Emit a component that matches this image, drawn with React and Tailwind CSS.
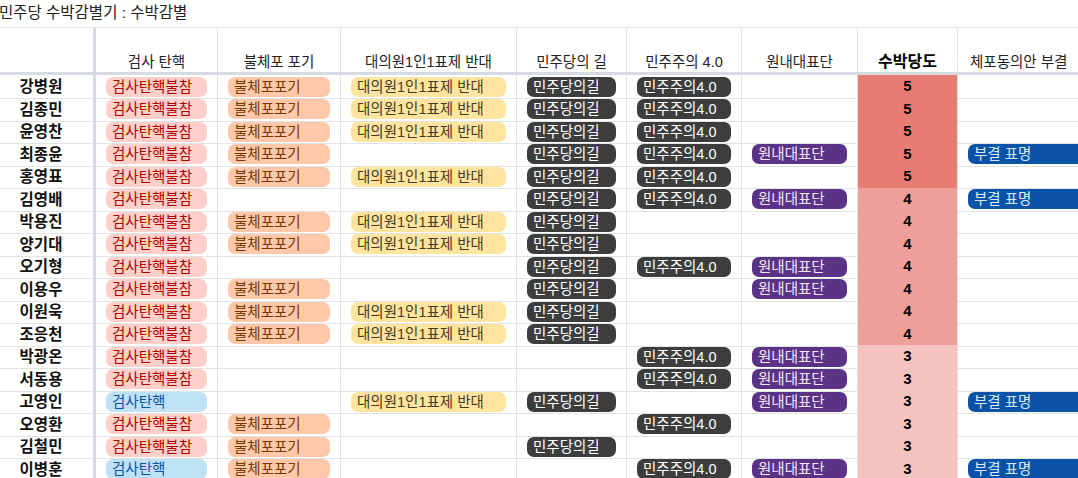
const CHIP = {
  검사탄핵불참: 'bg-[#ffcfc9] text-[#b10202]',
  검사탄핵: 'bg-[#bfe1f6] text-[#0a53a8]',
  불체포포기: 'bg-[#ffc8aa] text-[#753800]',
  '대의원1인1표제 반대': 'bg-[#ffe5a0] text-[#473821]',
  민주당의길: 'bg-[#3d3d3d] text-white',
  '민주주의4.0': 'bg-[#3d3d3d] text-white',
  원내대표단: 'bg-[#5a3286] text-[#f3e6fa]',
  '부결 표명': 'bg-[#0a53a8] text-[#d6ecfa]',
}

const scoreBg = {
  5: 'bg-[#e67c73]',
  4: 'bg-[#ee9f99]',
  3: 'bg-[#f4c3c0]',
}

const A = '검사탄핵불참'
const B = '검사탄핵'
const P = '불체포포기'
const D = '대의원1인1표제 반대'
const G = '민주당의길'
const M = '민주주의4.0'
const W = '원내대표단'
const V = '부결 표명'

const rows = [
  ['강병원', A, P, D, G, M, '', 5, ''],
  ['김종민', A, P, D, G, M, '', 5, ''],
  ['윤영찬', A, P, D, G, M, '', 5, ''],
  ['최종윤', A, P, '', G, M, W, 5, V],
  ['홍영표', A, P, D, G, M, '', 5, ''],
  ['김영배', A, '', '', G, M, W, 4, V],
  ['박용진', A, P, D, G, '', '', 4, ''],
  ['양기대', A, P, D, G, '', '', 4, ''],
  ['오기형', A, '', '', G, M, W, 4, ''],
  ['이용우', A, P, '', G, '', W, 4, ''],
  ['이원욱', A, P, D, G, '', '', 4, ''],
  ['조응천', A, P, D, G, '', '', 4, ''],
  ['박광온', A, '', '', '', M, W, 3, ''],
  ['서동용', A, '', '', '', M, W, 3, ''],
  ['고영인', B, '', D, G, '', W, 3, V],
  ['오영환', A, P, '', '', M, '', 3, ''],
  ['김철민', A, P, '', G, '', '', 3, ''],
  ['이병훈', B, P, '', '', M, W, 3, V],
]

const headers = ['검사 탄핵', '불체포 포기', '대의원1인1표제 반대', '민주당의 길', '민주주의 4.0', '원내대표단', '수박당도', '체포동의안 부결']

const grid = 'grid grid-cols-[96px_122px_123px_176px_110px_115px_116px_100px_140px]'

function Chip({ label }) {
  if (!label) return null
  return (
    <div className={`mx-[10px] h-[20px] rounded-[7px] px-[6px] text-[14.5px] leading-[20px] whitespace-nowrap overflow-hidden ${CHIP[label]}`}>
      {label}
    </div>
  )
}

export default function App() {
  return (
    <div className="w-[1078px] h-[478px] overflow-hidden bg-white text-[#222]" style={{ fontFamily: '"Liberation Sans", "Noto Sans CJK KR", sans-serif' }}>
      <div className="h-[28px] border-b border-[#e2e3e3] text-[15.5px] leading-[25px] whitespace-nowrap -ml-[1px]">
        민주당 수박감별기 : 수박감별
      </div>

      <div className={`${grid} h-[47px] border-b-[3px] border-[#d6dae1]`}>
        <div className="border-r-[3px] border-[#d6dae1]" />
        {headers.map((h, i) => (
          <div
            key={h}
            className={`flex items-end justify-center pb-[1px] leading-[18px] border-r border-[#e2e3e3] whitespace-nowrap overflow-hidden ${
              i === 6 ? 'font-bold text-[16px] text-black' : 'text-[14.5px]'
            } ${i === 7 ? 'justify-start pl-[12px]' : ''}`}
          >
            {h}
          </div>
        ))}
      </div>

      {rows.map((r) => (
        <div key={r[0]} className={`${grid} h-[22.5px]`}>
          <div className="flex items-center justify-center pr-[11px] border-r-[3px] border-[#d6dae1] border-b border-b-[#e2e3e3] font-bold text-[15.5px] text-[#111]">
            {r[0]}
          </div>
          {r.slice(1, 7).map((c, i) => (
            <div key={i} className="flex flex-col justify-center border-r border-b border-[#e2e3e3]">
              <Chip label={c} />
            </div>
          ))}
          <div className={`flex items-center justify-center border-r border-b border-[#e2e3e3] font-bold text-[15px] text-black ${scoreBg[r[7]]}`}>
            {r[7]}
          </div>
          <div className="flex flex-col justify-center border-r border-b border-[#e2e3e3]">
            <Chip label={r[8]} />
          </div>
        </div>
      ))}
    </div>
  )
}
